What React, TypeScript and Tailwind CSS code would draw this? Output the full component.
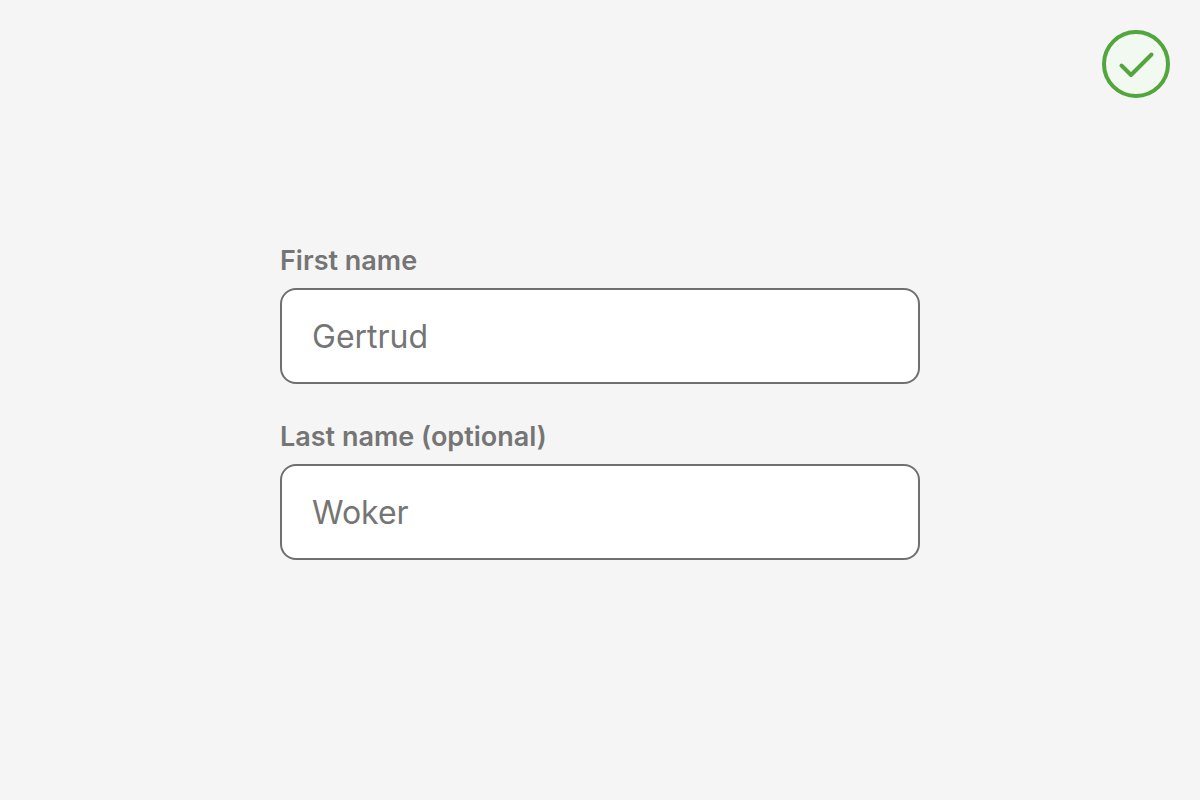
import { useId } from "react";

type FieldProps = { label: string; placeholder: string };

function TextField({ label, placeholder }: FieldProps) {
  const id = useId();
  return (
    <div className="flex flex-col gap-1.5">
      <label htmlFor={id} className="text-[27px] leading-[42px] font-semibold">
        {label}
      </label>
      <input
        id={id}
        type="text"
        placeholder={placeholder}
        className="h-24 w-full rounded-2xl border-2 border-[#707070] bg-white px-[30px] text-[32px] text-[#757575] outline-none placeholder:text-[#757575]"
      />
    </div>
  );
}

function SuccessBadge() {
  return (
    <svg
      role="img"
      aria-label="Success"
      viewBox="0 0 68 68"
      className="absolute top-[30px] right-[30px] size-[68px]"
      fill="none"
      stroke="#53a63e"
      strokeWidth="4"
      strokeLinecap="round"
      strokeLinejoin="round"
    >
      <circle cx="34" cy="34" r="32" fill="#f2f9f1" />
      <path d="M19.5 35.5 L29 45 L49.5 24.5" />
    </svg>
  );
}

export default function App() {
  return (
    <main className="relative flex min-h-screen items-center justify-center bg-[#f5f5f5] font-['Inter',sans-serif] text-[#757575]">
      <SuccessBadge />
      <form className="flex w-full max-w-[640px] flex-col gap-8">
        <TextField label="First name" placeholder="Gertrud" />
        <TextField label="Last name (optional)" placeholder="Woker" />
      </form>
    </main>
  );
}
